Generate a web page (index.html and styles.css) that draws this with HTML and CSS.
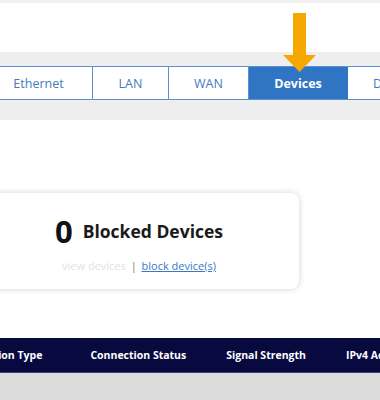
FILE: index.html
```html
<!DOCTYPE html>
<html lang="en">
<head>
  <meta charset="UTF-8" />
  <title>Devices</title>
  <link rel="stylesheet" href="styles.css">
</head>
<body>
  <div class="top-strip"></div>
  <div class="header-space"></div>

  <div class="tab-band">
    <nav class="tabs">
      <div class="tab tab-ethernet">Ethernet</div>
      <div class="tab tab-lan">LAN</div>
      <div class="tab tab-wan">WAN</div>
      <div class="tab tab-devices active">Devices</div>
      <div class="tab tab-more">DSL</div>
    </nav>
  </div>

  <div class="content">
    <div class="card">
      <div class="count-line">
        <span class="count">0</span>
        <span class="count-label">Blocked Devices</span>
      </div>
      <div class="card-links">
        <span class="link-muted">view devices</span>
        <span class="sep">|</span>
        <a class="link" href="#">block device(s)</a>
      </div>
    </div>
  </div>

  <div class="table-head">
    <span class="col col-type">Connection Type</span>
    <span class="col col-status">Connection Status</span>
    <span class="col col-signal">Signal Strength</span>
    <span class="col col-ip">IPv4 Address</span>
  </div>
  <div class="table-body"></div>

  <svg class="pointer" width="40" height="64" viewBox="0 0 40 64">
    <rect x="13" y="0" width="13" height="43" fill="#f6a800"/>
    <polygon points="3,42 36,42 19.5,59" fill="#f6a800"/>
  </svg>
</body>
</html>
```

FILE: styles.css
```css
body {
  margin: 0;
  font-family: 'Open Sans', sans-serif;
  background: #fff;
  width: 380px;
  height: 400px;
  overflow: hidden;
  position: relative;
}

.top-strip {
  height: 3px;
  background: #f1f1f1;
}

.header-space {
  height: 49px;
  background: #fff;
}

.tab-band {
  background: #eeeeee;
  height: 68px;
  padding-top: 14px;
  box-sizing: border-box;
}

.tabs {
  display: flex;
  margin-left: -15px;
  height: 34px;
  background: #fff;
  border-top: 1px solid #5b8fd6;
  border-bottom: 1px solid #5b8fd6;
  box-sizing: border-box;
}

.tab {
  display: flex;
  align-items: center;
  justify-content: center;
  flex-shrink: 0;
  font-size: 12.5px;
  color: #4679bd;
  border-right: 1px solid #5b8fd6;
  box-sizing: border-box;
}

.tab-ethernet { width: 108px; }
.tab-lan { width: 76px; }
.tab-wan { width: 80px; }
.tab-devices { width: 99px; }
.tab-more {
  width: 90px;
  justify-content: flex-start;
  padding-left: 25px;
}

.tab.active {
  background: #3074c4;
  color: #fff;
  font-weight: bold;
  border-color: #3074c4;
}

.content {
  padding-top: 73px;
  height: 218px;
  box-sizing: border-box;
}

.card {
  margin-left: -21px;
  width: 320px;
  height: 96px;
  background: #fff;
  border-radius: 8px;
  box-shadow: 0 0 6px rgba(0, 0, 0, 0.18);
  box-sizing: border-box;
  padding-top: 20px;
  text-align: center;
}

.count-line {
  display: flex;
  align-items: center;
  justify-content: center;
  gap: 10px;
}

.count {
  font-size: 31px;
  font-weight: bold;
  color: #111;
  line-height: 36px;
}

.count-label {
  font-size: 17.5px;
  font-weight: bold;
  color: #1a1a1a;
}

.card-links {
  margin-top: 9px;
  font-size: 11px;
}

.link-muted {
  color: #e2e2e2;
}

.sep {
  color: #777;
  margin: 0 2px;
}

.link {
  color: #3b78c4;
  text-decoration: underline;
}

.table-head {
  height: 35px;
  background: #07093f;
  display: flex;
  align-items: center;
  white-space: nowrap;
  border-bottom: 1px solid #3a3d6b;
  box-sizing: border-box;
}

.col {
  color: #fff;
  font-size: 10.5px;
  font-weight: bold;
  flex-shrink: 0;
}

.col-type { margin-left: -45px; }
.col-status { margin-left: 48px; }
.col-signal { margin-left: 40px; }
.col-ip { margin-left: 40px; }

.table-body {
  height: 27px;
  background: #dcdcdc;
}

.pointer {
  position: absolute;
  left: 280px;
  top: 13px;
}
```
